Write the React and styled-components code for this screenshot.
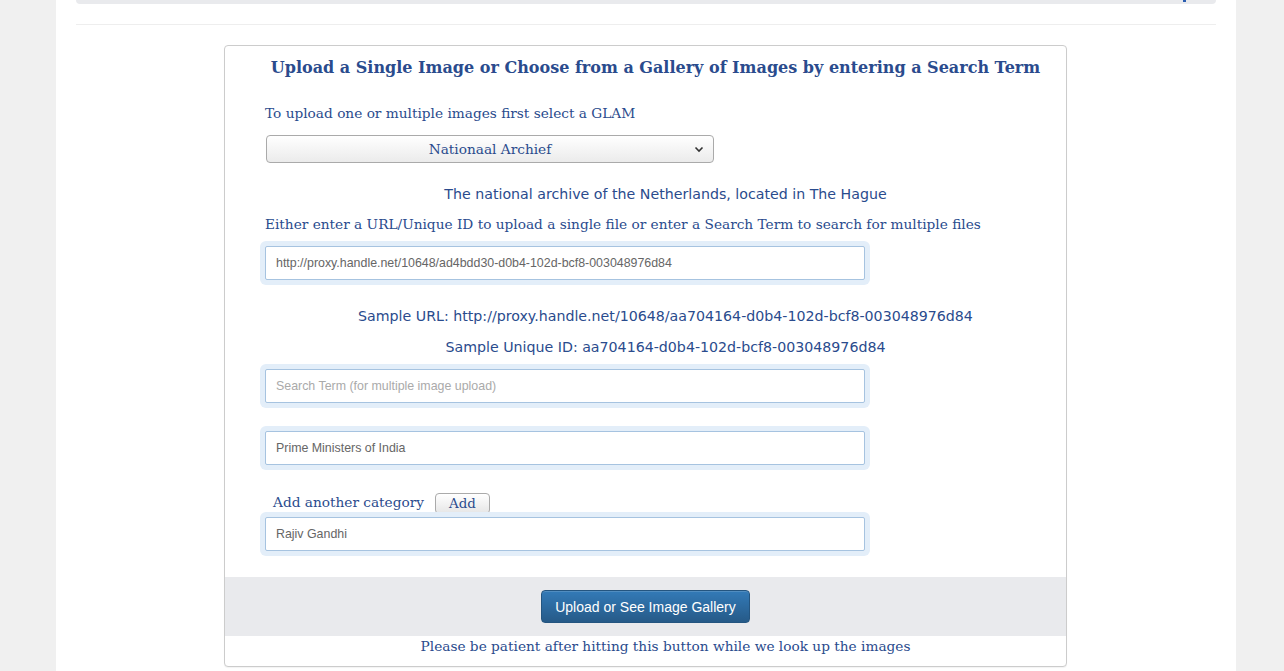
import React from "react";
import styled, { createGlobalStyle } from "styled-components";

const GlobalStyle = createGlobalStyle`
  html, body {
    margin: 0;
    padding: 0;
    background: #f0f0f0;
    font-family: "DejaVu Serif", serif;
  }
`;

const Page = styled.div`
  width: 1180px;
  margin-left: 56px;
  min-height: 671px;
  background: #fff;
  padding: 0 20px;
  box-sizing: border-box;
`;

const TopBar = styled.div`
  height: 4px;
  background: #e9eaed;
  border-radius: 0 0 4px 4px;
  position: relative;
`;

const TopLinkTail = styled.span`
  position: absolute;
  right: 30px;
  top: 0;
  width: 3px;
  height: 2px;
  background: #2a5db0;
`;

const Rule = styled.hr`
  border: 0;
  border-top: 1px solid #eee;
  margin: 20px 0 0;
`;

const Card = styled.div`
  width: 843px;
  margin: 20px 0 0 148px;
  box-sizing: border-box;
  border: 1px solid #ccc;
  border-radius: 4px;
  background: #fff;
  box-shadow: 0 1px 1px rgba(0, 0, 0, 0.05);
`;

const Title = styled.h3`
  margin: 0;
  padding: 12px 0 0 20px;
  text-align: center;
  font-family: "DejaVu Serif", serif;
  font-weight: bold;
  font-size: 16px;
  line-height: 20px;
  color: #2a4b8d;
`;

const Body = styled.div`
  padding: 0 0 0 40px;
  display: flex;
  flex-direction: column;
  align-items: flex-start;
`;

const Label = styled.div`
  font-family: "DejaVu Serif", serif;
  font-size: 13.7px;
  line-height: 20px;
  color: #2a4b8d;
  margin-top: ${(p) => p.$top || 0}px;
  margin-left: ${(p) => p.$left || 0}px;
`;

const Note = styled.div`
  align-self: stretch;
  text-align: center;
  font-family: "DejaVu Sans", sans-serif;
  font-size: 14.2px;
  line-height: 20px;
  color: #2a4b8d;
  margin-top: ${(p) => p.$top || 0}px;
`;

const SelectBox = styled.div`
  position: relative;
  margin: 12px 0 0 1px;
  width: 448px;
  height: 28px;
  box-sizing: border-box;
  border: 1px solid #aaa;
  border-radius: 4px;
  background: linear-gradient(#ffffff, #ebebeb);
  display: flex;
  align-items: center;
  justify-content: center;
  font-family: "DejaVu Serif", serif;
  font-size: 13.7px;
  color: #2a4b8d;
`;

const Chevron = styled.svg`
  position: absolute;
  right: 9px;
  top: 10px;
`;

const InputWrap = styled.div`
  margin: ${(p) => p.$top || 0}px 0 0 -5px;
  padding: 5px;
  border-radius: 6px;
  background: #e3eef9;
`;

const Input = styled.input`
  display: block;
  width: 600px;
  height: 34px;
  box-sizing: border-box;
  border: 1px solid #a6c3e0;
  border-radius: 2px;
  padding: 0 10px;
  background: #fff;
  font-family: "Liberation Sans", Arial, sans-serif;
  font-size: 12.4px;
  color: #666;
  outline: none;
  &::placeholder {
    color: #aaa;
  }
`;

const AddRow = styled.div`
  display: flex;
  align-items: flex-start;
  gap: 11px;
  height: 20px;
  margin: 22px 0 0 8px;
`;

const SmallButton = styled.button`
  margin-top: 1px;
  height: 21px;
  padding: 0 13px;
  border: 1px solid #aaa;
  border-radius: 4px;
  background: linear-gradient(#ffffff, #e6e6e6);
  font-family: "DejaVu Serif", serif;
  font-size: 13.4px;
  color: #2a4b8d;
  line-height: 19px;
`;

const Footer = styled.div`
  margin-top: 21px;
  height: 59px;
  background: #e9eaed;
  display: flex;
  align-items: center;
  justify-content: center;
`;

const PrimaryButton = styled.button`
  height: 33px;
  padding: 0 13.5px;
  border: 1px solid #245580;
  border-radius: 4px;
  background: linear-gradient(#337ab7, #265a88);
  color: #fff;
  font-family: "Liberation Sans", Arial, sans-serif;
  font-size: 14px;
  box-shadow: inset 0 1px 0 rgba(255, 255, 255, 0.15);
`;

const Patience = styled.div`
  padding: 0 0 10px 40px;
  text-align: center;
  font-family: "DejaVu Serif", serif;
  font-size: 13.7px;
  line-height: 20px;
  color: #2a4b8d;
`;

export default function App() {
  return (
    <>
      <GlobalStyle />
      <Page>
        <TopBar>
          <TopLinkTail />
        </TopBar>
        <Rule />
        <Card>
          <Title>
            Upload a Single Image or Choose from a Gallery of Images by entering a Search Term
          </Title>
          <Body>
            <Label $top={25}>To upload one or multiple images first select a GLAM</Label>
            <SelectBox>
              Nationaal Archief
              <Chevron width="10" height="7" viewBox="0 0 10 7">
                <path d="M1.5 1.5 L5 5 L8.5 1.5" fill="none" stroke="#333" strokeWidth="1.6" />
              </Chevron>
            </SelectBox>
            <Note $top={21}>The national archive of the Netherlands, located in The Hague</Note>
            <Label $top={10}>
              Either enter a URL/Unique ID to upload a single file or enter a Search Term to search for multiple files
            </Label>
            <InputWrap $top={7}>
              <Input defaultValue="http://proxy.handle.net/10648/ad4bdd30-d0b4-102d-bcf8-003048976d84" />
            </InputWrap>
            <Note $top={21}>Sample URL: http://proxy.handle.net/10648/aa704164-d0b4-102d-bcf8-003048976d84</Note>
            <Note $top={11}>Sample Unique ID: aa704164-d0b4-102d-bcf8-003048976d84</Note>
            <InputWrap $top={7}>
              <Input placeholder="Search Term (for multiple image upload)" />
            </InputWrap>
            <InputWrap $top={18}>
              <Input defaultValue="Prime Ministers of India" />
            </InputWrap>
            <AddRow>
              <Label>Add another category</Label>
              <SmallButton>Add</SmallButton>
            </AddRow>
            <InputWrap>
              <Input defaultValue="Rajiv Gandhi" />
            </InputWrap>
          </Body>
          <Footer>
            <PrimaryButton>Upload or See Image Gallery</PrimaryButton>
          </Footer>
          <Patience>Please be patient after hitting this button while we look up the images</Patience>
        </Card>
      </Page>
    </>
  );
}
